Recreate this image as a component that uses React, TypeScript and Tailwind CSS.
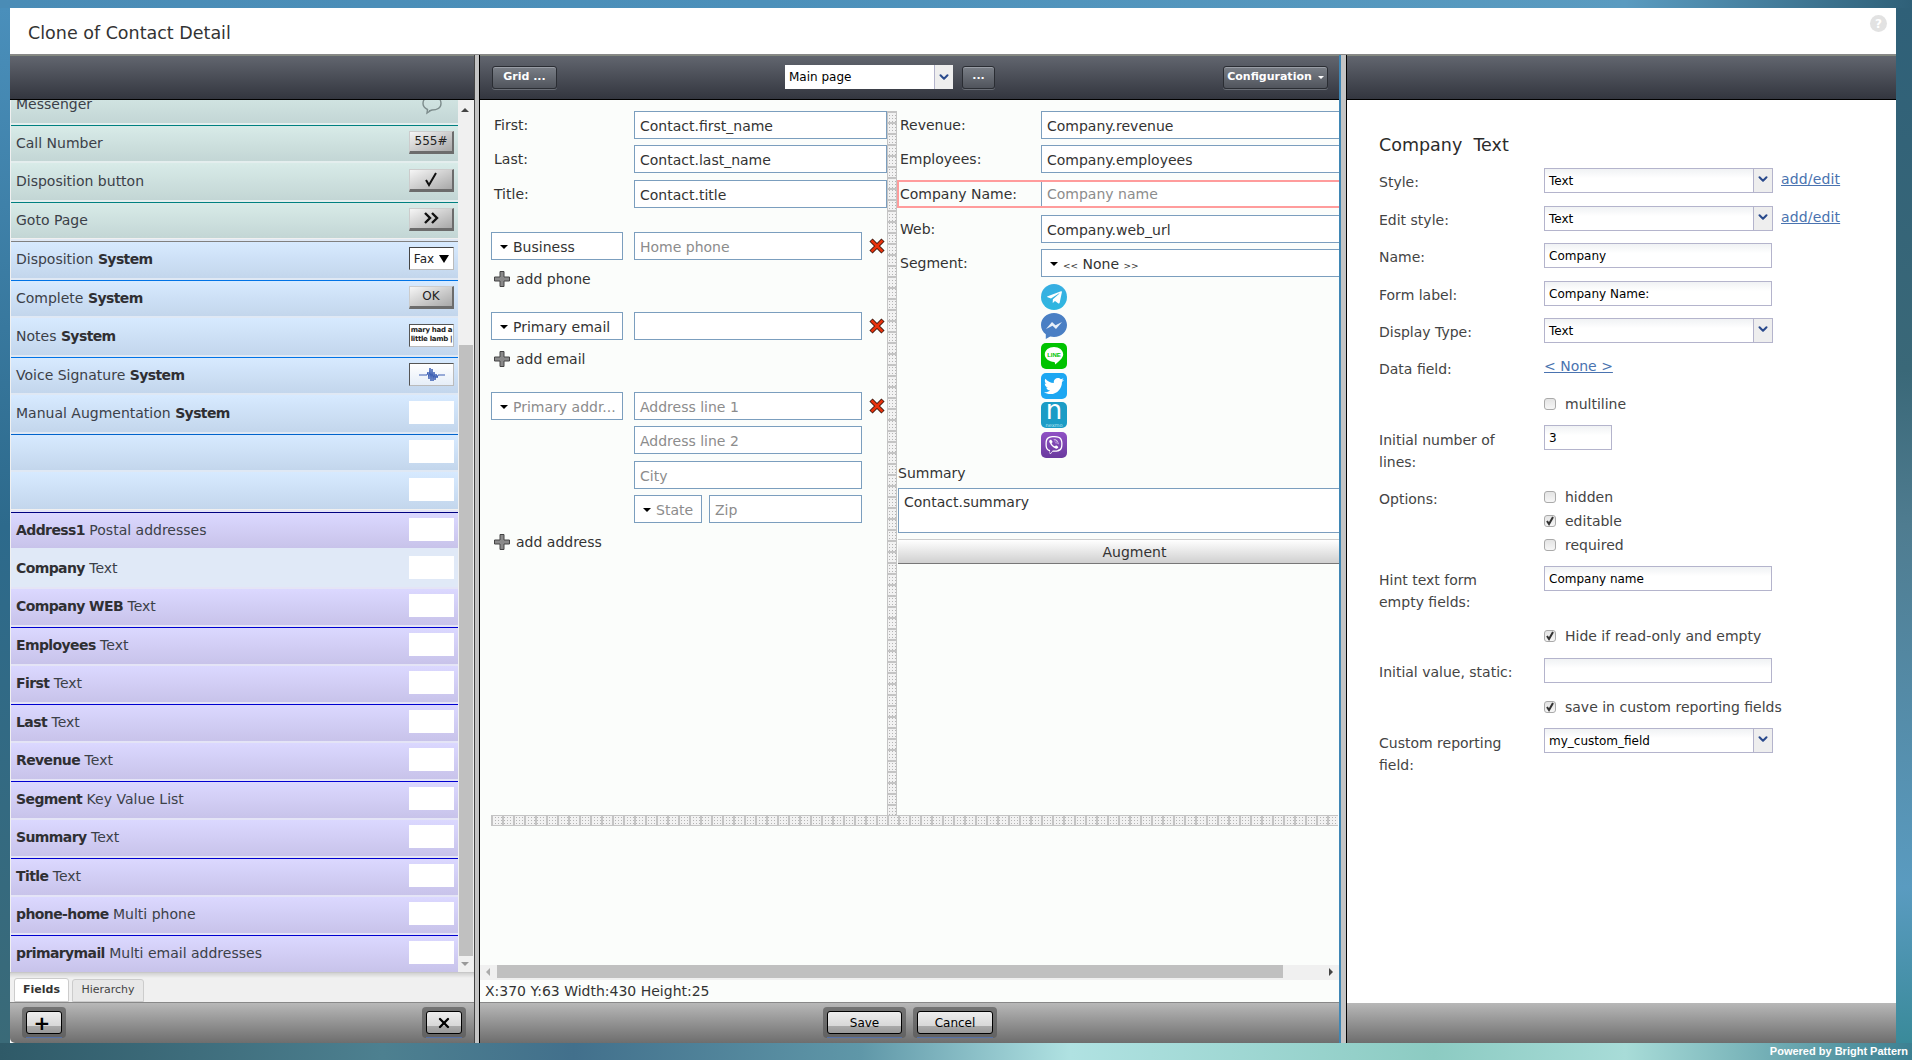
import type { ReactNode } from "react"
import { ChevronDown, X } from "lucide-react"
import { FaTwitter, FaTelegramPlane, FaViber } from "react-icons/fa"

type Tone = "teal" | "blue" | "purple" | "selected"

type Field = {
  name?: string
  kind?: string
  tone: Tone
  line?: string
  preview?: ReactNode
}

const toneClass: Record<Tone, string> = {
  teal: "bg-gradient-to-b from-[#d8ebe8] to-[#c3d6d5]",
  blue: "bg-gradient-to-b from-[#d7eaff] to-[#c3d6ec]",
  purple: "bg-gradient-to-b from-[#dbd8ff] to-[#c8c3ea]",
  selected: "bg-[#e0e9f7]",
}

const bandClass: Record<Tone, string> = {
  teal: "bg-[#e4eeee]",
  blue: "bg-[#dfe8f4]",
  purple: "bg-[#e4e4f6]",
  selected: "bg-[#e0e9f7]",
}

function PreviewButton({ children }: { children: ReactNode }) {
  return (
    <div className="flex h-[23px] w-[45px] items-center justify-center border-b-[3px] border-r-[2px] border-b-[#6c6c6c] border-r-[#6c6c6c] border-l border-t border-l-[#ccc] border-t-[#ccc] bg-gradient-to-br from-[#f6f6f6] to-[#a8a8a8] text-[12px] text-[#222]">
      {children}
    </div>
  )
}

const whiteBox = <div className="h-[23px] w-[45px] bg-white" />

const fields: Field[] = [
  {
    name: "Messenger",
    tone: "teal",
    preview: (
      <div className="flex h-[23px] w-[45px] items-end justify-center">
        <svg width="22" height="20" viewBox="0 0 22 20" fill="none" stroke="#7d8c8c" strokeWidth="1.4">
          <path d="M11 1c5.500 0 9 3 9 7.500S16 15 11 15l-3 1 1 0-3 2 .5-3.500C3.500 13 2 11 2 8.500 2 4 5.500 1 11 1z" />
        </svg>
      </div>
    ),
  },
  { name: "Call Number", tone: "teal", line: "border-b-[#008080]", preview: <PreviewButton>555#</PreviewButton> },
  {
    name: "Disposition button",
    tone: "teal",
    preview: (
      <PreviewButton>
        <svg width="16" height="15" viewBox="0 0 16 15" fill="none" stroke="#111" strokeWidth="2">
          <path d="M3 8l3 5 7-12" />
        </svg>
      </PreviewButton>
    ),
  },
  {
    name: "Goto Page",
    tone: "teal",
    line: "border-b-[#008080]",
    preview: (
      <PreviewButton>
        <svg width="16" height="12" viewBox="0 0 16 12" fill="none" stroke="#111" strokeWidth="2.4">
          <path d="M2 1l5 5-5 5M9 1l5 5-5 5" />
        </svg>
      </PreviewButton>
    ),
  },
  {
    name: "Disposition",
    kind: "System",
    tone: "blue",
    line: "border-b-[#808080]",
    preview: (
      <div className="flex h-[23px] w-[45px] items-center justify-center gap-[5px] border-l border-t border-l-[#444] border-t-[#444] border-r border-b border-r-[#bbb] border-b-[#bbb] bg-white text-[12px] text-[#222]">
        Fax
        <div className="h-0 w-0 border-x-[5px] border-t-[8px] border-x-transparent border-t-black" />
      </div>
    ),
  },
  { name: "Complete", kind: "System", tone: "blue", line: "border-b-[#0073e6]", preview: <PreviewButton>OK</PreviewButton> },
  {
    name: "Notes",
    kind: "System",
    tone: "blue",
    preview: (
      <div className="flex h-[23px] w-[45px] flex-col items-center justify-center whitespace-nowrap border border-l-[#555] border-t-[#555] border-r-[#bbb] border-b-[#bbb] bg-white text-[7px] font-bold leading-[9px] tracking-[-0.3px] text-[#222]">
        <span>mary had a</span>
        <span>little lamb |</span>
      </div>
    ),
  },
  {
    name: "Voice Signature",
    kind: "System",
    tone: "blue",
    line: "border-b-[#0073e6]",
    preview: (
      <div className="flex h-[23px] w-[45px] items-center justify-center border border-l-[#555] border-t-[#555] border-r-[#bbb] border-b-[#bbb] bg-gradient-to-b from-white to-[#e6eef8]">
        <svg width="30" height="19" viewBox="0 0 30 19" fill="none" stroke="#3c5fb4" strokeWidth="1">
          <path d="M2 10h8l1-3 1 7 1-11 1 13 1-12 1 12 1-9 1 8 1-6 1 4 1-3h7" />
        </svg>
      </div>
    ),
  },
  { name: "Manual Augmentation", kind: "System", tone: "blue", preview: whiteBox },
  { tone: "blue", line: "border-b-[#0063cc]", preview: whiteBox },
  { tone: "blue", preview: whiteBox },
  { name: "Address1", kind: "Postal addresses", tone: "purple", line: "border-b-[#000080]", preview: whiteBox },
  { name: "Company", kind: "Text", tone: "selected", preview: whiteBox },
  { name: "Company WEB", kind: "Text", tone: "purple", preview: whiteBox },
  { name: "Employees", kind: "Text", tone: "purple", line: "border-b-[#0000d0]", preview: whiteBox },
  { name: "First", kind: "Text", tone: "purple", preview: whiteBox },
  { name: "Last", kind: "Text", tone: "purple", line: "border-b-[#0000d0]", preview: whiteBox },
  { name: "Revenue", kind: "Text", tone: "purple", preview: whiteBox },
  { name: "Segment", kind: "Key Value List", tone: "purple", line: "border-b-[#0000d0]", preview: whiteBox },
  { name: "Summary", kind: "Text", tone: "purple", preview: whiteBox },
  { name: "Title", kind: "Text", tone: "purple", line: "border-b-[#0000d0]", preview: whiteBox },
  { name: "phone-home", kind: "Multi phone", tone: "purple", preview: whiteBox },
  { name: "primarymail", kind: "Multi email addresses", tone: "purple", line: "border-b-[#0000d0]", preview: whiteBox },
]

function FieldRow({ field, gapAbove }: { field: Field; gapAbove: boolean }) {
  const boldFirst = field.tone === "purple" || field.tone === "selected"
  const boldClass = "font-bold tracking-[-0.6px] text-[#2f2f33]"
  return (
    <div className={`ml-px flex h-[38.5px] flex-col ${gapAbove ? "mt-[1px]" : ""}`}>
      {field.line ? (
        <div className={`h-[3px] shrink-0 border-b ${field.line} ${bandClass[field.tone]}`} />
      ) : (
        <div className={`h-[2px] shrink-0 ${bandClass[field.tone]}`} />
      )}
      <div className={`flex flex-1 items-center justify-between pl-[5px] pr-[4px] ${toneClass[field.tone]}`}>
        <span className="text-[14px] text-[#3b4048]">
          {boldFirst ? <span className={boldClass}>{field.name}</span> : field.name}
          {field.kind ? " " : ""}
          {boldFirst ? field.kind : field.kind ? <span className={boldClass}>{field.kind}</span> : null}
        </span>
        <div className="-mt-[2px]">{field.preview}</div>
      </div>
    </div>
  )
}

function Toolbar({ children }: { children?: ReactNode }) {
  return (
    <div className="flex h-[45px] shrink-0 items-center border-b border-b-black bg-gradient-to-b from-[#636770] to-[#33363f] shadow-[inset_0_1px_0_#858a80]">
      {children}
    </div>
  )
}

function DarkButton({ children, className }: { children: ReactNode; className: string }) {
  return (
    <div
      className={`flex h-[23px] items-center justify-center rounded-[3px] border border-[#2a2d33] bg-gradient-to-b from-[#7a7f87] to-[#50545c] text-[11px] font-bold text-white shadow-[inset_0_1px_0_#9a9ea6,0_1px_0_#6a6e76] ${className}`}
    >
      {children}
    </div>
  )
}

function BevelButton({ children, className }: { children: ReactNode; className: string }) {
  return (
    <div className={`flex h-[31px] flex-col rounded-[4px] bg-[#5a5a5a]/70 px-[4px] pt-[4px] ${className}`}>
      <div className="flex h-[23px] items-center justify-center rounded-[3px] border border-black bg-[linear-gradient(#ededed_0,#d8d8d8_65%,#aaa_65%,#999_100%)] text-[12px] text-black">
        {children}
      </div>
      <div className="mt-auto h-px bg-[#5570a8]" />
    </div>
  )
}

function Caret() {
  return <div className="h-0 w-0 shrink-0 border-x-[4px] border-t-[4px] border-x-transparent border-t-black" />
}

function Box({ children, className, hint }: { children?: ReactNode; className: string; hint?: boolean }) {
  return (
    <div
      className={`flex h-[28px] items-center border border-[#7b9ebe] bg-white px-[5px] pt-[2px] text-[14px] ${hint ? "text-[#8c8c8c]" : "text-[#333]"} ${className}`}
    >
      {children}
    </div>
  )
}

function DropBox({ children, className, hint }: { children: ReactNode; className: string; hint?: boolean }) {
  return (
    <Box hint={hint} className={`gap-[5px] !pl-[8px] ${className}`}>
      <Caret />
      <span>{children}</span>
    </Box>
  )
}

function RedX() {
  return (
    <svg width="16" height="16" viewBox="0 0 16 16" className="ml-[7px] mt-[6px] shrink-0">
      <path d="M2 2l12 12M14 2L2 14" stroke="#3a1a10" strokeWidth="4.500" />
      <path d="M2.500 2.500l11 11M13.500 2.500l-11 11" stroke="#e8320c" strokeWidth="2.600" />
    </svg>
  )
}

function AddLink({ children, className }: { children: ReactNode; className: string }) {
  return (
    <div className={`flex h-[20px] items-center gap-[6px] pl-[3px] text-[14px] text-[#333] ${className}`}>
      <svg width="16" height="16" viewBox="0 0 16 16">
        <path d="M6 0.500h4v5.500h5.500v4H10v5.500H6V10H0.500V6H6z" fill="#8a8a8a" stroke="#444" strokeWidth="1" />
      </svg>
      {children}
    </div>
  )
}

function LeftLabelRow({ label, value, className }: { label: string; value: string; className?: string }) {
  return (
    <div className={`flex items-center ${className ?? ""}`}>
      <span className="w-[143px] pl-[3px] text-[14px] text-[#333]">{label}</span>
      <Box className="w-[253px]">{value}</Box>
    </div>
  )
}

function RightLabelRow({ label, value, className, hint }: { label: string; value: ReactNode; className?: string; hint?: boolean }) {
  return (
    <div className={`flex items-center ${className ?? ""}`}>
      <span className="w-[144px] pl-[3px] text-[14px] text-[#333]">{label}</span>
      <Box hint={hint} className="flex-1 border-r-0">
        {value}
      </Box>
    </div>
  )
}

function SocialIcons() {
  return (
    <div className="ml-[144px] mt-[7px] flex flex-col">
      <div className="flex h-[26px] w-[26px] items-center justify-center rounded-full bg-gradient-to-b from-[#37aee2] to-[#2fb7e0] text-white">
        <FaTelegramPlane size={17} />
      </div>
      <svg width="26" height="26" viewBox="0 0 26 26" className="mt-[3px]">
        <path d="M13 0C5.800 0 0 5.400 0 12c0 3.800 1.900 7.100 4.800 9.300V26l4.400-2.400c1.200.3 2.500.5 3.800.5 7.200 0 13-5.400 13-12S20.200 0 13 0z" fill="#4a7fc4" />
        <path d="M5 16l6-7 3.500 3.200L21 9l-6 7-3.500-3.200z" fill="#e8eff8" />
      </svg>
      <div className="mt-[4px] flex h-[26px] w-[26px] items-center justify-center rounded-[5px] bg-[#00c300]">
        <svg width="22" height="22" viewBox="0 0 22 22">
          <path d="M11 2c5 0 9.200 3.200 9.200 7.400 0 3.400-4.600 7.200-8.200 10 0-1 .2-2.200-.8-2.500C6 16.700 1.800 13.500 1.800 9.400 1.800 5.200 6 2 11 2z" fill="#fff" />
          <text x="11" y="12" textAnchor="middle" fontSize="6" fontWeight="700" fill="#00c300" fontFamily="'Liberation Sans',sans-serif">
            LINE
          </text>
        </svg>
      </div>
      <div className="mt-[4px] flex h-[26px] w-[26px] items-center justify-center rounded-[5px] bg-[#1da7f2] text-white">
        <FaTwitter size={20} />
      </div>
      <div className="mt-[3px] flex h-[26px] w-[26px] flex-col items-center rounded-[5px] bg-[#1b9cc6] text-white">
        <span className="-mt-[5px] text-[26px] leading-[26px]">n</span>
        <span className="text-[5px] leading-[5px] text-[#bde6f2]">nexmo</span>
      </div>
      <div className="mt-[4px] flex h-[26px] w-[26px] items-center justify-center rounded-[5px] bg-gradient-to-b from-[#8f50c4] to-[#6a3a9e] text-white">
        <FaViber size={18} />
      </div>
    </div>
  )
}

function Chevron() {
  return <ChevronDown size={14} strokeWidth={3.500} color="#2a4a8c" />
}

function Input({ value, className }: { value?: string; className?: string }) {
  return (
    <div
      className={`flex h-[25px] items-center border border-[#b4b4cc] bg-gradient-to-b from-[#f0f2f4] to-white to-40% pl-[4px] text-[12px] text-black ${className ?? "w-[228px]"}`}
    >
      {value}
    </div>
  )
}

function SelectInput({ value }: { value: string }) {
  return (
    <div className="flex h-[25px] w-[229px] border border-[#b4b4cc]">
      <div className="flex flex-1 items-center bg-gradient-to-b from-[#f0f2f4] to-white to-40% pl-[4px] text-[12px] text-black">
        {value}
      </div>
      <div className="flex w-[19px] items-start justify-center border-l border-l-[#b4b4cc] bg-[#eeeeee] pt-[3px]">
        <Chevron />
      </div>
    </div>
  )
}

function Check({ checked, label }: { checked?: boolean; label: string }) {
  return (
    <div className="flex h-[24px] items-center text-[14px] text-[#444]">
      <div className="mr-[9px] flex h-[12px] w-[12px] items-center justify-center rounded-[3px] border border-[#aaa] bg-gradient-to-b from-[#e4e4e4] to-[#f6f6f6]">
        {checked ? (
          <svg width="10" height="10" viewBox="0 0 10 10" fill="none" stroke="#333" strokeWidth="2">
            <path d="M2 5l2 3 4-7" />
          </svg>
        ) : null}
      </div>
      {label}
    </div>
  )
}

function PropRow({ label, children, className }: { label?: ReactNode; children: ReactNode; className: string }) {
  return (
    <div className={`flex ${className}`}>
      <div className="w-[165px] pt-[3px] text-[14px] leading-[22px] text-[#444]">{label}</div>
      <div className="flex items-start">{children}</div>
    </div>
  )
}

function AddEdit() {
  return <span className="ml-[8px] mt-[1px] text-[14px] tracking-[0.15px] text-[#4a73b0] underline">add/edit</span>
}

export default function App() {
  return (
    <div className="flex h-[1060px] w-[1912px] flex-col overflow-hidden font-['DejaVu_Sans',sans-serif]">
      <div className="h-[8px] shrink-0 bg-[linear-gradient(90deg,#4a8cb6_0%,#4c90ba_40%,#5a9bc0_85%,#2f6078_100%)]" />
      <div className="flex flex-1">
        <div className="w-[10px] bg-[linear-gradient(180deg,#4a8fbb_0%,#2d6a8c_50%,#3a6a78_100%)]" />
        <div className="flex h-[1035px] w-[1886px] flex-col overflow-hidden rounded-tl-[8px] rounded-tr-[8px] rounded-bl-[5px] bg-white">
          <div className="relative flex h-[47px] shrink-0 items-center border-b border-b-[#888] pl-[18px] pt-[5px] text-[17.5px] text-[#333]">
            Clone of Contact Detail
            <div className="absolute right-[9px] top-[7px] flex h-[17px] w-[17px] items-center justify-center rounded-full bg-[#e2e2e2] text-[12px] font-bold text-white">
              ?
            </div>
          </div>
          <div className="flex flex-1">
            {/* fields list */}
            <div className="flex w-[465px] flex-col border-r border-r-[#444]">
              <Toolbar />
              <div className="flex h-[873px] shrink-0 border-b border-b-[#c8c8c8] bg-[#f0f0f0]">
                <div className="flex-1 overflow-hidden bg-[#f0f0f0]">
                  <div className="-mt-[16px]">
                    {fields.map((field, index) => (
                      <FieldRow key={index} field={field} gapAbove={index === 4 || field.name === "Address1"} />
                    ))}
                  </div>
                </div>
                <div className="relative w-[16px] bg-[#f0f0f0]">
                  <div className="absolute left-[1px] top-[245px] h-[611px] w-[14px] bg-[#c0c0c0]" />
                  <div className="absolute left-[3px] top-[8px] h-0 w-0 border-x-[4px] border-b-[4px] border-x-transparent border-b-[#444]" />
                  <div className="absolute left-[3px] top-[862px] h-0 w-0 border-x-[4px] border-t-[4px] border-x-transparent border-t-[#999]" />
                </div>
              </div>
              <div className="flex h-[30px] shrink-0 items-end gap-[3px] border-b border-b-[#888] bg-[linear-gradient(#d2d2d2_0,#f0f0f0_5px)] pl-[4px] text-[11px] text-[#333]">
                <div className="flex h-[24px] w-[55px] items-center justify-center rounded-t-[3px] border border-[#ccc] bg-white font-bold">
                  Fields
                </div>
                <div className="flex h-[23px] w-[72px] items-center justify-center rounded-t-[3px] border border-[#ccc] bg-[#e8e8e8] text-[#444]">
                  Hierarchy
                </div>
              </div>
              <div className="flex flex-1 items-start justify-between bg-gradient-to-b from-[#b8b8b8] to-[#6e6e6e] pl-[12px] pr-[8px] pt-[4px]">
                <BevelButton className="w-[44px]">
                  <span className="pr-[4px] text-[20px] font-bold leading-none">+</span>
                </BevelButton>
                <BevelButton className="w-[44px]">
                  <X size={16} strokeWidth={3.500} />
                </BevelButton>
              </div>
            </div>
            <div className="w-[4px] border-r-0 bg-[#c4c4c4]" />
            <div className="w-px bg-black" />

            {/* form canvas */}
            <div className="flex w-[859px] flex-col">
              <Toolbar>
                <DarkButton className="ml-[12px] w-[65px]">Grid ...</DarkButton>
                <div className="ml-[228px] flex h-[24px] w-[168px] bg-white">
                  <div className="flex flex-1 items-center pl-[4px] text-[12px] text-black">Main page</div>
                  <div className="flex w-[19px] items-center justify-center border-l border-l-[#b4b4cc] bg-[#eeeeee]">
                    <Chevron />
                  </div>
                </div>
                <DarkButton className="ml-[9px] w-[33px] items-end pb-[3px]">...</DarkButton>
                <DarkButton className="ml-auto mr-[11px] w-[105px] gap-[6px]">
                  Configuration
                  <div className="h-0 w-0 border-x-[3px] border-t-[3px] border-x-transparent border-t-white" />
                </DarkButton>
              </Toolbar>
              <div className="flex flex-1 flex-col bg-[#fbfdfb]">
                <div className="mt-[11px] flex h-[704px] shrink-0">
                  <div className="w-[407px] pl-[11px]">
                    <LeftLabelRow label="First:" value="Contact.first_name" />
                    <LeftLabelRow label="Last:" value="Contact.last_name" className="mt-[6px]" />
                    <LeftLabelRow label="Title:" value="Contact.title" className="mt-[7px]" />

                    <div className="mt-[24px] flex">
                      <DropBox className="w-[132px]">Business</DropBox>
                      <Box hint className="ml-[11px] w-[228px]">
                        Home phone
                      </Box>
                      <RedX />
                    </div>
                    <AddLink className="mt-[9px]">add phone</AddLink>

                    <div className="mt-[23px] flex">
                      <DropBox className="w-[132px]">Primary email</DropBox>
                      <Box className="ml-[11px] w-[228px]" />
                      <RedX />
                    </div>
                    <AddLink className="mt-[9px]">add email</AddLink>

                    <div className="mt-[23px] flex">
                      <DropBox hint className="w-[132px]">
                        Primary addr...
                      </DropBox>
                      <Box hint className="ml-[11px] w-[228px]">
                        Address line 1
                      </Box>
                      <RedX />
                    </div>
                    <Box hint className="ml-[143px] mt-[6px] w-[228px]">
                      Address line 2
                    </Box>
                    <Box hint className="ml-[143px] mt-[7px] w-[228px]">
                      City
                    </Box>
                    <div className="ml-[143px] mt-[6px] flex w-[228px] gap-[7px]">
                      <DropBox hint className="w-[68px]">
                        State
                      </DropBox>
                      <Box hint className="flex-1">
                        Zip
                      </Box>
                    </div>
                    <AddLink className="mt-[9px]">add address</AddLink>
                  </div>

                  <div className="w-[10px] shrink-0 border-x border-x-[#c4c4c4] bg-[linear-gradient(#c4c4c4_2px,transparent_2px),radial-gradient(#b4b4b4_0.6px,#f2f2f2_0.8px)] bg-[length:11px_11px,3px_3px]" />

                  <div className="flex-1">
                    <RightLabelRow label="Revenue:" value="Company.revenue" />
                    <RightLabelRow label="Employees:" value="Company.employees" className="mt-[6px]" />
                    <div className="mt-[7px] flex h-[28px] items-center border-2 border-r-0 border-[#ff9c9c]">
                      <span className="w-[142px] shrink-0 pl-[1px] text-[14px] text-[#333]">Company Name:</span>
                      <div className="flex h-full flex-1 items-center border-l border-l-[#7b9ebe] bg-white pl-[5px] text-[14px] text-[#8c8c8c]">
                        Company name
                      </div>
                    </div>
                    <RightLabelRow label="Web:" value="Company.web_url" className="mt-[7px]" />
                    <div className="mt-[6px] flex items-center">
                      <span className="w-[144px] pl-[3px] text-[14px] text-[#333]">Segment:</span>
                      <DropBox className="flex-1 border-r-0">
                        <span className="text-[9px]">{"<<"}</span> None <span className="text-[9px]">{">>"}</span>
                      </DropBox>
                    </div>
                    <SocialIcons />
                    <div className="ml-px mt-[5px] flex h-[20px] items-center text-[14px] text-[#333]">Summary</div>
                    <div className="ml-px mt-[5px] h-[45px] border border-r-0 border-[#7b9ebe] bg-white px-[5px] pt-[3px] text-[14px] text-[#333]">
                      Contact.summary
                    </div>
                    <div className="ml-px mt-[6px] flex h-[25px] items-center justify-center border-b border-t border-b-[#777] border-t-[#ccc] bg-gradient-to-b from-white to-[#d0d0d0] pl-[32px] pt-px text-[14px] text-[#333]">
                      Augment
                    </div>
                  </div>
                </div>
                <div className="ml-[11px] mr-px h-[11px] shrink-0 border-y border-y-[#c4c4c4] bg-[linear-gradient(90deg,#c4c4c4_2px,transparent_2px),radial-gradient(#b4b4b4_0.6px,#f2f2f2_0.8px)] bg-[length:11px_11px,3px_3px]" />
                <div className="flex-1" />
                <div className="relative h-[15px] shrink-0 bg-[#f0f0f0]">
                  <div className="absolute left-[17px] top-0 h-[13px] w-[786px] bg-[#c0c0c0]" />
                  <div className="absolute left-[6px] top-[3px] h-0 w-0 border-y-[4px] border-r-[4px] border-y-transparent border-r-[#aaa]" />
                  <div className="absolute right-[6px] top-[3px] h-0 w-0 border-y-[4px] border-l-[4px] border-y-transparent border-l-[#444]" />
                </div>
                <div className="flex h-[23px] shrink-0 items-center border-b border-b-[#888] pl-[5px] pt-px text-[14px] text-[#333]">
                  X:370 Y:63 Width:430 Height:25
                </div>
              </div>
              <div className="flex h-[40px] shrink-0 items-start gap-[7px] bg-gradient-to-b from-[#b8b8b8] to-[#6e6e6e] pl-[343px] pt-[4px]">
                <BevelButton className="w-[83px]">Save</BevelButton>
                <BevelButton className="w-[84px]">Cancel</BevelButton>
              </div>
            </div>
            <div className="w-[2px] bg-[#3f86b4]" />
            <div className="w-[5px] bg-[#c4c4c4]" />
            <div className="w-px bg-black" />

            {/* property panel */}
            <div className="flex flex-1 flex-col">
              <Toolbar />
              <div className="flex-1 bg-white pl-[32px]">
                <div className="mt-[33px] flex h-[24px] items-center whitespace-pre text-[17.5px] text-[#2b2b2b]">
                  Company  Text
                </div>
                <PropRow label="Style:" className="mt-[11px]">
                  <SelectInput value="Text" />
                  <AddEdit />
                </PropRow>
                <PropRow label="Edit style:" className="mt-[13px]">
                  <SelectInput value="Text" />
                  <AddEdit />
                </PropRow>
                <PropRow label="Name:" className="mt-[12px]">
                  <Input value="Company" />
                </PropRow>
                <PropRow label="Form label:" className="mt-[13px]">
                  <Input value="Company Name:" />
                </PropRow>
                <PropRow label="Display Type:" className="mt-[12px]">
                  <SelectInput value="Text" />
                </PropRow>
                <PropRow label="Data field:" className="mt-[12px]">
                  <span className="text-[14px] leading-[22px] text-[#4a73b0] underline">{"< None >"}</span>
                </PropRow>
                <div className="ml-[165px] mt-[12px]">
                  <Check label="multiline" />
                </div>
                <PropRow label={<>Initial number of<br />lines:</>} className="mt-[10px]">
                  <div className="-mt-px">
                    <Input value="3" className="w-[68px]" />
                  </div>
                </PropRow>
                <PropRow label="Options:" className="mt-[12px]">
                  <div className="flex flex-col">
                    <Check label="hidden" />
                    <Check checked label="editable" />
                    <Check label="required" />
                  </div>
                </PropRow>
                <PropRow label={<>Hint text form<br />empty fields:</>} className="mt-[9px]">
                  <Input value="Company name" />
                </PropRow>
                <div className="ml-[165px] mt-[11px]">
                  <Check checked label="Hide if read-only and empty" />
                </div>
                <PropRow label="Initial value, static:" className="mt-[10px]">
                  <Input />
                </PropRow>
                <div className="ml-[165px] mt-[12px]">
                  <Check checked label="save in custom reporting fields" />
                </div>
                <PropRow label={<>Custom reporting<br />field:</>} className="mt-[10px]">
                  <div className="-mt-px">
                    <SelectInput value="my_custom_field" />
                  </div>
                </PropRow>
              </div>
              <div className="h-[40px] shrink-0 bg-gradient-to-b from-[#b8b8b8] to-[#6e6e6e]" />
            </div>
          </div>
        </div>
        <div className="w-[16px] bg-[linear-gradient(180deg,#2f6078_0%,#3a6878_35%,#4f7c90_50%,#5a9bc0_85%,#3a8a9a_100%)]" />
      </div>
      <div className="flex h-[17px] shrink-0 items-center justify-end bg-[linear-gradient(90deg,#2f5a68_0%,#4d8090_20%,#42708c_30%,#5f97a8_45%,#b0e2e2_56%,#8ccbc2_75%,#a8dcd8_85%,#3c8092_100%)] pr-[4px] font-['Liberation_Sans',sans-serif] text-[11px] font-bold text-white">
        Powered by Bright Pattern
      </div>
    </div>
  )
}
